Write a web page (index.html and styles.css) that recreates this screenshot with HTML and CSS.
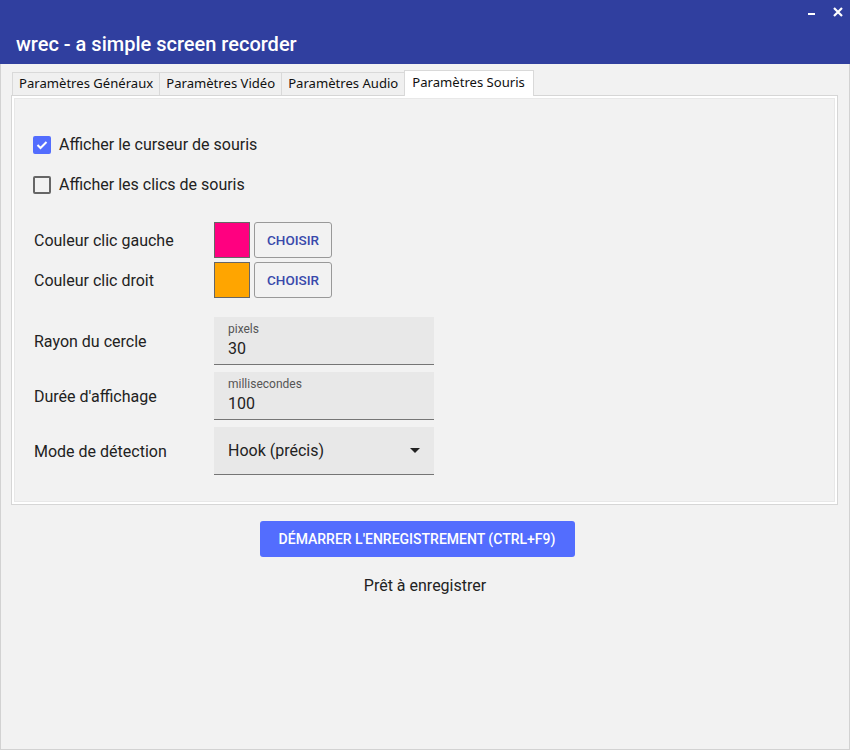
FILE: index.html
```html
<!DOCTYPE html>
<html lang="fr">
<head>
<meta charset="utf-8">
<title>wrec</title>
<link rel="stylesheet" href="styles.css">
</head>
<body>
<div class="window">
  <header class="titlebar">
    <div class="controls">
      <svg class="ctl-min" width="8" height="3" viewBox="0 0 8 3"><rect x="0" y="0" width="7" height="2" fill="#fff"/></svg>
      <svg class="ctl-close" width="10" height="10" viewBox="0 0 10 10"><path d="M1 1 L9 9 M9 1 L1 9" stroke="#fff" stroke-width="2.2"/></svg>
    </div>
    <h1 class="title">wrec - a simple screen recorder</h1>
  </header>

  <main class="content">
    <div class="tabs">
      <div class="tab">Paramètres Généraux</div>
      <div class="tab">Paramètres Vidéo</div>
      <div class="tab">Paramètres Audio</div>
      <div class="tab active">Paramètres Souris</div>
    </div>
    <section class="panel">
      <label class="check-row">
        <span class="checkbox checked">
          <svg width="12" height="10" viewBox="0 0 12 10"><path d="M1.5 5 L4.5 8 L10.5 2" fill="none" stroke="#fff" stroke-width="2"/></svg>
        </span>
        <span class="check-text">Afficher le curseur de souris</span>
      </label>
      <label class="check-row">
        <span class="checkbox"></span>
        <span class="check-text">Afficher les clics de souris</span>
      </label>

      <div class="color-row first">
        <span class="label">Couleur clic gauche</span>
        <span class="swatch pink"></span>
        <button class="choose">CHOISIR</button>
      </div>
      <div class="color-row">
        <span class="label">Couleur clic droit</span>
        <span class="swatch orange"></span>
        <button class="choose">CHOISIR</button>
      </div>

      <div class="field-row first">
        <span class="label">Rayon du cercle</span>
        <div class="field">
          <span class="field-label">pixels</span>
          <span class="field-value">30</span>
        </div>
      </div>
      <div class="field-row">
        <span class="label">Durée d'affichage</span>
        <div class="field">
          <span class="field-label">millisecondes</span>
          <span class="field-value">100</span>
        </div>
      </div>
      <div class="field-row">
        <span class="label">Mode de détection</span>
        <div class="field select">
          <span class="select-value">Hook (précis)</span>
          <svg class="arrow" width="10" height="5" viewBox="0 0 10 5"><path d="M0 0 L10 0 L5 5 Z" fill="#222"/></svg>
        </div>
      </div>
    </section>

    <div class="actions">
      <button class="start">DÉMARRER L'ENREGISTREMENT (CTRL+F9)</button>
      <p class="status">Prêt à enregistrer</p>
    </div>
  </main>
</div>
</body>
</html>
```

FILE: styles.css
```css
* { box-sizing: border-box; }

html, body {
  margin: 0;
  padding: 0;
  background: #f2f2f2;
}

body {
  font-family: Roboto, "Liberation Sans", sans-serif;
  color: #222;
}

.window {
  width: 850px;
  height: 750px;
  border: 1px solid #d2d2d2;
  border-top: none;
  display: flex;
  flex-direction: column;
  background: #f2f2f2;
}

.titlebar {
  height: 64px;
  background: #303f9f;
  margin: 0 -1px;
  position: relative;
  display: flex;
  align-items: flex-end;
}

.controls {
  position: absolute;
  top: 7px;
  right: 7px;
  display: flex;
  align-items: flex-start;
  gap: 17px;
}

.ctl-min { margin-top: 6px; display: block; }
.ctl-close { display: block; }

.title {
  margin: 0 0 7px 16px;
  font-size: 20px;
  font-weight: 500;
  color: #fff;
  line-height: 26px;
}

.content {
  flex: 1;
  display: flex;
  flex-direction: column;
}

.tabs {
  display: flex;
  align-items: flex-end;
  margin: 6px 0 0 11px;
  height: 25px;
  position: relative;
  z-index: 1;
}

.tab {
  height: 23px;
  padding: 0 6px;
  font-family: "Noto Sans", "Liberation Sans", sans-serif;
  font-size: 13.1px;
  line-height: 21px;
  color: #111;
  background: #f0f0f0;
  border: 1px solid #d9d9d9;
  border-bottom: none;
  margin-right: -1px;
}

.tab.active {
  height: 26px;
  margin-bottom: -1px;
  background: #fff;
  padding: 0 8px 0 7px;
  line-height: 22px;
}

.panel {
  margin: 0 11px 0 10px;
  height: 410px;
  border: 1px solid #d6d6d6;
  box-shadow: inset 0 0 0 2px #fff, inset 0 0 0 3px #e8e8e8;
  background: #f2f2f2;
  padding: 37px 0 0 21px;
  display: flex;
  flex-direction: column;
}

.check-row {
  display: flex;
  align-items: center;
  height: 24px;
  gap: 8px;
  margin-bottom: 16px;
  font-size: 16px;
}

.checkbox {
  width: 18px;
  height: 18px;
  border: 2px solid #666;
  border-radius: 2px;
  display: flex;
  align-items: center;
  justify-content: center;
}

.checkbox.checked {
  background: #536dfe;
  border-color: #536dfe;
}

.check-text { line-height: 24px; }

.label {
  width: 181px;
  flex-shrink: 0;
  font-size: 16px;
  padding-left: 1px;
}

.color-row {
  display: flex;
  align-items: center;
  height: 36px;
  margin-top: 4px;
}

.color-row.first { margin-top: 9px; }

.swatch {
  width: 36px;
  height: 36px;
  border: 1px solid #666;
}

.swatch.pink { background: #ff0080; }
.swatch.orange { background: #ffa500; }

.choose {
  margin-left: 4px;
  width: 78px;
  height: 36px;
  background: #f2f2f2;
  border: 1px solid #999;
  border-radius: 3px;
  font-family: Roboto, "Liberation Sans", sans-serif;
  font-weight: 500;
  font-size: 13.5px;
  color: #3949ab;
  padding: 0;
}

.field-row {
  display: flex;
  align-items: center;
  height: 48px;
  margin-top: 7px;
}

.field-row.first { margin-top: 19px; }

.field {
  width: 220px;
  height: 48px;
  background: #e8e8e8;
  border-bottom: 1px solid #757575;
  display: flex;
  flex-direction: column;
  padding: 5px 14px 0 14px;
}

.field-label {
  font-size: 12px;
  color: #555;
  line-height: 14px;
}

.field-value {
  font-size: 16px;
  line-height: 22px;
  margin-top: 2px;
}

.field.select {
  flex-direction: row;
  align-items: center;
  justify-content: space-between;
  padding: 0 14px 0 14px;
}

.select-value {
  font-size: 16px;
  line-height: 22px;
}

.actions {
  display: flex;
  flex-direction: column;
  align-items: center;
  padding-top: 16px;
}

.start {
  width: 315px;
  height: 36px;
  background: #536dfe;
  color: #fff;
  border: none;
  border-radius: 3px;
  font-family: Roboto, "Liberation Sans", sans-serif;
  font-weight: 500;
  font-size: 14px;
  padding: 0;
  margin-right: 16px;
}

.status {
  margin: 19px 0 0 0;
  font-size: 16px;
  line-height: 20px;
}
```
